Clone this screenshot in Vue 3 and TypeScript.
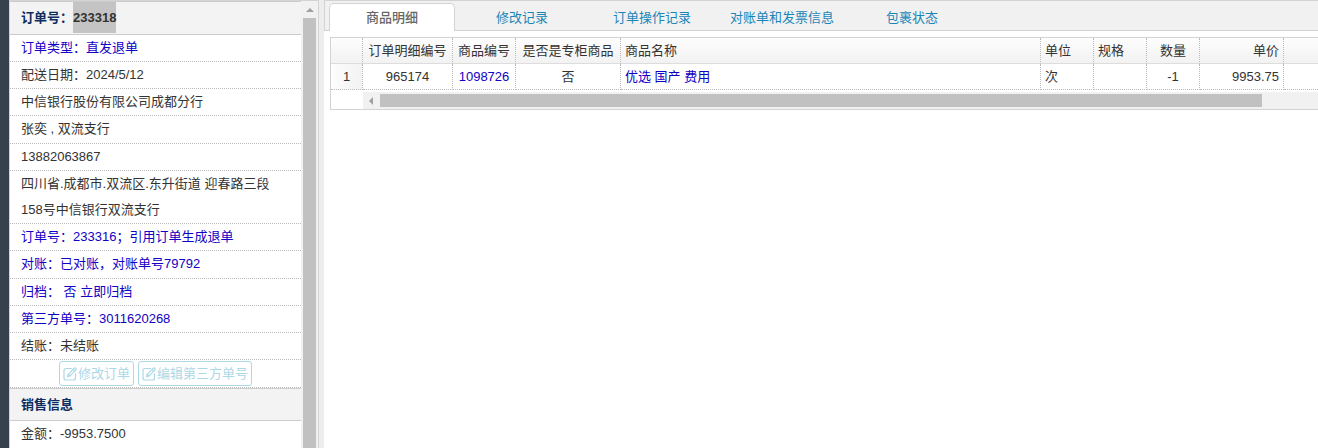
<script setup lang="ts">
import { ref } from 'vue'

interface InfoRow {
  text: string
  link?: boolean
  tall?: boolean
}

interface Column {
  key: string
  title: string
  align: 'left' | 'center' | 'right'
}

const orderNo = '233318'

const infoRows: InfoRow[] = [
  { text: '订单类型：直发退单', link: true },
  { text: '配送日期：2024/5/12' },
  { text: '中信银行股份有限公司成都分行' },
  { text: '张奕 , 双流支行', tall: true },
  { text: '13882063867' },
  { text: '四川省.成都市.双流区.东升街道 迎春路三段158号中信银行双流支行' },
  { text: '订单号：233316；引用订单生成退单', link: true },
  { text: '对账：已对账，对账单号79792', link: true, tall: true },
  { text: '归档： 否 立即归档', link: true },
  { text: '第三方单号：3011620268', link: true },
  { text: '结账：未结账' },
]

const actions: string[] = ['修改订单', '编辑第三方单号']

const tabs: string[] = ['商品明细', '修改记录', '订单操作记录', '对账单和发票信息', '包裹状态']
const activeTab = ref<number>(0)

const columns: Column[] = [
  { key: 'detailNo', title: '订单明细编号', align: 'center' },
  { key: 'goodsNo', title: '商品编号', align: 'center' },
  { key: 'counter', title: '是否是专柜商品', align: 'center' },
  { key: 'name', title: '商品名称', align: 'left' },
  { key: 'unit', title: '单位', align: 'left' },
  { key: 'spec', title: '规格', align: 'left' },
  { key: 'qty', title: '数量', align: 'center' },
  { key: 'price', title: '单价', align: 'right' },
]

const items: Record<string, string>[] = [
  {
    detailNo: '965174',
    goodsNo: '1098726',
    counter: '否',
    name: '优选 国产 费用',
    unit: '次',
    spec: '',
    qty: '-1',
    price: '9953.75',
  },
]

const linked = new Set<string>(['goodsNo', 'name'])
</script>

<template>
  <div class="page">
    <div class="rail"></div>

    <aside class="side">
      <div class="side-body">
        <h2 class="heading">订单号：<span class="selected">{{ orderNo }}</span></h2>
        <p v-for="row in infoRows" :key="row.text" class="info" :class="{ tall: row.tall }">
          <a v-if="row.link" href="#">{{ row.text }}</a>
          <template v-else>{{ row.text }}</template>
        </p>
        <div class="actions">
          <button v-for="label in actions" :key="label" type="button" class="action">
            <svg class="edit" viewBox="0 0 14 14" aria-hidden="true">
              <path d="M8.5 1.5H3A2 2 0 0 0 1 3.5V11a2 2 0 0 0 2 2h7.500a2 2 0 0 0 2-2V6.500" />
              <path d="M4.500 9.800L5.200 7.300L11.200 1.200Q12.200 0.500 13 1.300Q13.600 2.100 12.900 2.900L7 8.900Z" />
              <path d="M10.200 2.300L11.900 4M5.200 7.300L7 8.900" />
            </svg>{{ label }}
          </button>
        </div>
        <h2 class="heading section">销售信息</h2>
        <p class="info tall">金额：-9953.7500</p>
      </div>
      <div class="vscroll">
        <svg class="arrow-up" viewBox="0 0 8 4" aria-hidden="true"><path d="M0 4L4 0L8 4Z" /></svg>
        <div class="vthumb"></div>
      </div>
    </aside>

    <div class="splitter"></div>

    <main class="main">
      <nav class="tabs" role="tablist">
        <button
          v-for="(tab, i) in tabs"
          :key="tab"
          type="button"
          role="tab"
          class="tab"
          :class="{ active: i === activeTab }"
          :aria-selected="i === activeTab"
          @click="activeTab = i"
        >
          {{ tab }}
        </button>
      </nav>

      <section class="grid">
        <table>
          <colgroup>
            <col class="w-index" />
            <col v-for="c in columns" :key="c.key" :class="'w-' + c.key" />
            <col />
          </colgroup>
          <thead>
            <tr>
              <th></th>
              <th v-for="c in columns" :key="c.key" :class="c.align">{{ c.title }}</th>
              <th class="rest"></th>
            </tr>
          </thead>
          <tbody>
            <tr v-for="(item, i) in items" :key="item.detailNo">
              <td class="index">{{ i + 1 }}</td>
              <td v-for="c in columns" :key="c.key" :class="c.align">
                <a v-if="linked.has(c.key)" href="#">{{ item[c.key] }}</a>
                <template v-else>{{ item[c.key] }}</template>
              </td>
              <td class="rest"></td>
            </tr>
          </tbody>
        </table>
        <div class="hscroll">
          <svg class="arrow-left" viewBox="0 0 4 8" aria-hidden="true"><path d="M4 0L0 4L4 8Z" /></svg>
          <div class="hthumb"></div>
        </div>
      </section>
    </main>
  </div>
</template>

<style>
body {
  margin: 0;
  background: #fff;
}
</style>

<style scoped>
.page {
  display: flex;
  height: 100vh;
  overflow: hidden;
  font: 13px/26px "Liberation Sans", "Noto Sans CJK SC", sans-serif;
  color: #333;
}

.page * {
  box-sizing: border-box;
}

a {
  color: #1200c4;
  text-decoration: none;
}

button {
  font: inherit;
  cursor: pointer;
}

.rail {
  flex: none;
  width: 9px;
  background: #36414d;
}

.side {
  flex: none;
  display: flex;
  width: 310px;
  border: 1px solid #d3d3d3;
  border-bottom: 0;
}

.side-body {
  flex: 1;
  min-width: 0;
  overflow: hidden;
}

.heading {
  display: flex;
  height: 34px;
  margin: 0;
  padding: 0 11px;
  border-top: 1px solid #ccc;
  border-bottom: 1px solid #ccc;
  background: #f3f3f3;
  color: #0e2d5f;
  font-size: 13px;
  line-height: 32px;
}

.section {
  height: 33px;
  line-height: 31px;
}

.selected {
  align-self: flex-start;
  height: 31px;
  background: #c4c4c4;
  color: #333;
}

.info {
  min-height: 27px;
  margin: 0;
  padding: 0 20px 0 11px;
  border-bottom: 1px dotted #bbb;
}

.tall {
  min-height: 28px;
}

.actions {
  display: flex;
  justify-content: center;
  gap: 4px;
  height: 28px;
  padding-top: 1px;
  border-bottom: 1px dotted #bbb;
}

.action {
  display: flex;
  align-items: center;
  height: 25px;
  padding: 0 3px;
  border: 1px solid #add8e6;
  border-radius: 3px;
  background: #fff;
  color: #add8e6;
  white-space: nowrap;
}

.edit {
  width: 14px;
  height: 14px;
  margin-right: 1px;
  fill: none;
  stroke: #add8e6;
  stroke-width: 1.2;
  stroke-linejoin: round;
  stroke-linecap: round;
}

.vscroll {
  flex: none;
  display: flex;
  flex-direction: column;
  align-items: center;
  width: 17px;
  background: #f1f1f1;
}

.arrow-up {
  flex: none;
  width: 8px;
  height: 4px;
  margin: 7px 0 6px;
  fill: #a0a0a0;
}

.vthumb {
  flex: 1;
  width: 13px;
  background: #c1c1c1;
}

.splitter {
  flex: none;
  width: 5px;
  background: #ededed;
}

.main {
  flex: 1;
  min-width: 0;
  overflow: hidden;
}

.tabs {
  display: flex;
  gap: 4px;
  height: 31px;
  padding: 2px 0 0 4px;
  border: 1px solid #d3d3d3;
  border-right: 0;
  background: #f1f1f1;
}

.tab {
  flex: none;
  width: 126px;
  height: 28px;
  padding: 0;
  border: 1px solid transparent;
  border-bottom: 0;
  border-radius: 5px 5px 0 0;
  background: none;
  color: #1a86b8;
  line-height: 26px;
}

.tab.active {
  border-color: #d3d3d3;
  background: #fff;
  color: #666;
  font-weight: 500;
}

.grid {
  margin: 6px 0 0 6px;
  border: 1px solid #d3d3d3;
  border-right: 0;
}

table {
  width: 100%;
  table-layout: fixed;
  border-collapse: separate;
  border-spacing: 0;
}

.w-index { width: 32px; }
.w-detailNo { width: 90px; }
.w-goodsNo { width: 63px; }
.w-counter { width: 105px; }
.w-name { width: 420px; }
.w-unit,
.w-spec,
.w-qty { width: 53px; }
.w-price { width: 84px; }

th,
td {
  height: 26px;
  padding: 0 4px;
  border-right: 1px dotted #bbb;
  border-bottom: 1px dotted #bbb;
  font-weight: normal;
  line-height: 24px;
  white-space: nowrap;
}

th {
  border-bottom: 1px solid #ddd;
  background: linear-gradient(#fdfdfd, #f2f2f2);
}

.left { text-align: left; }
.center { text-align: center; }
.right { text-align: right; }

.index {
  background: linear-gradient(90deg, #fdfdfd, #f2f2f2);
  text-align: center;
}

.rest {
  border-right: 0;
}

.hscroll {
  display: flex;
  align-items: center;
  height: 17px;
  margin: 2px 0 0 32px;
  background: #f1f1f1;
}

.arrow-left {
  flex: none;
  width: 4px;
  height: 8px;
  margin: 0 7px 0 6px;
  fill: #a0a0a0;
}

.hthumb {
  flex: 1;
  height: 13px;
  margin-right: 56px;
  background: #c1c1c1;
}
</style>
